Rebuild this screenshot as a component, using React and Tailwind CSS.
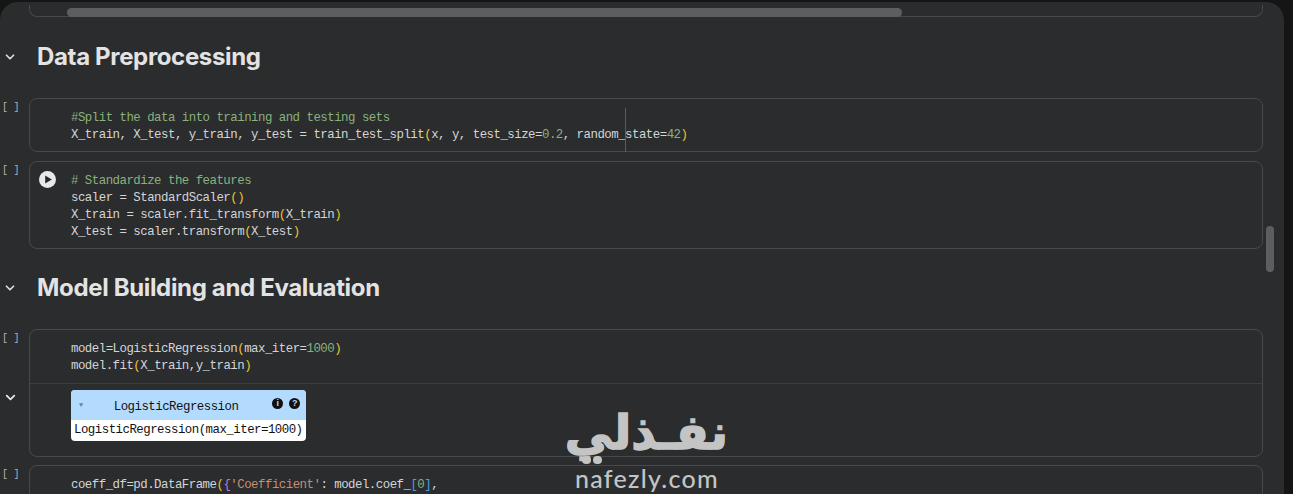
import React from 'react';
import { ChevronDown } from 'lucide-react';

const g = 'text-[#8ab17d]';

function Line({ children }) {
  return <div className="h-[17px] whitespace-pre">{children}</div>;
}

function Paren({ children }) {
  return <span className="text-[#e8c62e]">{children}</span>;
}

function Gutter() {
  return (
    <div className="w-[29px] shrink-0 pl-[2px] mt-[3px] text-[10px] tracking-[-0.3px] leading-[14px] text-[#b5b7b9] font-['Liberation_Mono',monospace]">[ ]</div>
  );
}

function Cell({ children, run, cursor }) {
  return (
    <div className="flex">
      <Gutter />
      <div className="relative w-[1234px] rounded-[8px] border border-[#47494b] pl-[41px] pt-[10px] pb-[8px] font-['Liberation_Mono',monospace] text-[12.4px] tracking-[-0.51px] text-[#d4d5d6]">
        {run && (
          <svg className="absolute left-[9px] top-[9px]" width="17" height="17" viewBox="0 0 17 17">
            <circle cx="8.5" cy="8.5" r="8.5" fill="#e8e8e8" />
            <path d="M6.2 4.4 L12.8 8.5 L6.2 12.6 Z" fill="#26282a" />
          </svg>
        )}
        {cursor && <div className="absolute left-[595px] top-[9px] h-[44px] w-px bg-[#5a5c5e]" />}
        {children}
      </div>
    </div>
  );
}

function Heading({ children, className }) {
  return (
    <div className={`flex items-center ${className}`}>
      <ChevronDown className="ml-[3px] w-[14px] h-[14px] text-[#dcdcdc]" strokeWidth={3} />
      <h2 className="ml-[20px] text-[24px] leading-[30px] font-bold tracking-[-0.34px] text-[#e3e3e3] font-['Inter',sans-serif]">{children}</h2>
    </div>
  );
}

export default function App() {
  return (
    <div className="relative flex h-[494px] w-[1293px] overflow-hidden bg-[#141514]">
      <div className="relative w-[1284px] overflow-hidden rounded-t-[18px] bg-[#2a2c2e] pt-[3px] mt-[2px]">
        {/* partial cell from the previous section */}
        <div className="ml-[29px] h-[12px] w-[1234px] rounded-b-[8px] border border-t-0 border-[#47494b]" />
        <div className="absolute left-[67px] top-[6px] h-[9px] w-[835px] rounded-full bg-[#5d5e60]" />

        <Heading className="mt-[25px]">Data Preprocessing</Heading>

        <div className="mt-[26px]">
          <Cell cursor>
            <Line><span className={g}>#Split the data into training and testing sets</span></Line>
            <Line>X_train, X_test, y_train, y_test = train_test_split<Paren>(</Paren>x, y, test_size=<span className={g}>0.2</span>, random_state=<span className={g}>42</span><Paren>)</Paren></Line>
          </Cell>
        </div>

        <div className="mt-[9px]">
          <Cell run>
            <Line><span className={g}># Standardize the features</span></Line>
            <Line>scaler = StandardScaler<Paren>()</Paren></Line>
            <Line>X_train = scaler.fit_transform<Paren>(</Paren>X_train<Paren>)</Paren></Line>
            <Line>X_test = scaler.transform<Paren>(</Paren>X_test<Paren>)</Paren></Line>
          </Cell>
        </div>

        <Heading className="mt-[24px]">Model Building and Evaluation</Heading>

        <div className="mt-[26px] flex">
          <Gutter />
          <div className="w-[1234px] rounded-[8px] border border-[#47494b] font-['Liberation_Mono',monospace] text-[12.4px] tracking-[-0.51px] text-[#d4d5d6]">
            <div className="border-b border-[#3c3e40] pl-[41px] pt-[10px] pb-[9px]">
              <Line>model=LogisticRegression<Paren>(</Paren>max_iter=<span className={g}>1000</span><Paren>)</Paren></Line>
              <Line>model.fit<Paren>(</Paren>X_train,y_train<Paren>)</Paren></Line>
            </div>
            <div className="relative pl-[41px] pt-[6px] pb-[15px]">
              <ChevronDown className="absolute -left-[27px] top-[6px] w-[15px] h-[15px] text-[#e3e3e3]" strokeWidth={3} />
              <div className="w-[235px] overflow-hidden rounded-[4px] bg-white text-[#111]">
                <div className="flex h-[30px] items-center bg-[#b3dbfd] pl-[8px] pr-[6px]">
                  <span className="text-[7px] text-[#6f8597]">▼</span>
                  <span className="ml-[31px] mt-[4px] flex-1">LogisticRegression</span>
                  <span className="mb-[3px] flex h-[11px] w-[11px] items-center justify-center rounded-full bg-[#111] text-[9px] font-bold text-[#b3dbfd] font-['Liberation_Sans',sans-serif]">i</span>
                  <span className="mb-[3px] ml-[6px] flex h-[11px] w-[11px] items-center justify-center rounded-full bg-[#111] text-[9px] font-bold text-[#b3dbfd] font-['Liberation_Sans',sans-serif]">?</span>
                </div>
                <div className="h-[21px] pl-[3px] leading-[21px] whitespace-pre">LogisticRegression(max_iter=1000)</div>
              </div>
            </div>
          </div>
        </div>

        <div className="mt-[8px]">
          <Cell>
            <Line>coeff_df=pd.DataFrame<Paren>(</Paren><span className="text-[#c678dd]">{'{'}</span><span className="text-[#c98d72]">'Coefficient'</span>: model.coef_<span className="text-[#4d9de0]">[</span><span className={g}>0</span><span className="text-[#4d9de0]">]</span>,</Line>
          </Cell>
        </div>

        {/* overlay scrollbar */}
        <div className="absolute left-[1266px] top-[224px] h-[46px] w-[8px] rounded-full bg-[#5d5e60]" />
      </div>

      {/* watermark */}
      <div className="absolute left-[566px] top-[403px] w-[162px] text-center text-[#c4c4c4]">
        <div dir="rtl" className="h-[58px] text-[48px] leading-[58px] font-bold font-['DejaVu_Sans',sans-serif] [-webkit-text-stroke:1.5px_#c4c4c4]">نفـذلي</div>
        <div className="flex gap-[2px] pl-[16px] h-[9px] -mt-[5px]">
          <span className="h-[8px] w-[9px] rounded-full bg-[#c4c4c4]" />
          <span className="h-[8px] w-[9px] rounded-full bg-[#c4c4c4]" />
        </div>
        <div className="mt-[1px] text-[25px] leading-[24px] tracking-[1.3px] font-medium font-['Lato',sans-serif]">nafezly.com</div>
      </div>
    </div>
  );
}
